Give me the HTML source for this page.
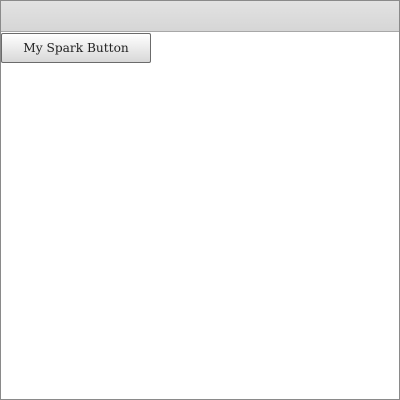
<!DOCTYPE html><html><head><style>
html,body{margin:0;padding:0;width:400px;height:400px;overflow:hidden;background:#fff}
.frame{position:absolute;left:0;top:0;width:398px;height:398px;border:1px solid #8a8a8a}
.hdr{position:absolute;left:1px;top:1px;width:398px;height:30px;background:linear-gradient(#e2e2e2,#d6d6d6);border-bottom:1px solid #a8a8a8}
.btn{position:absolute;left:1px;top:33px;width:148px;height:28px;border:1px solid #6b6b6b;border-radius:2px;background:linear-gradient(#fff,#d8d8d8);font:12.2px "DejaVu Serif","Liberation Serif",serif;color:#222;text-align:center;line-height:28px}
</style></head><body><div class="frame"></div><div class="hdr"></div><div class="btn">My Spark Button</div></body></html>
